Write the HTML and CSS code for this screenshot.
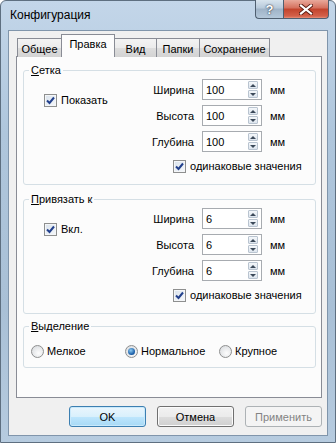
FILE: index.html
```html
<!DOCTYPE html>
<html>
<head>
    <title>Конфигурация</title>
    <meta charset="utf-8">
    <link rel="stylesheet" href="styles.css">
</head>
<body>
<div class="window">
    <div class="titlebar">
        <span class="title">Конфигурация</span>
        <div class="caption">
            <span class="cap-help">?</span>
            <span class="cap-close">
                <svg width="14" height="11" viewBox="0 0 14 11">
                    <path d="M2 1.5 L12 9.5 M12 1.5 L2 9.5" stroke="#5a1b10" stroke-width="4" stroke-linecap="square"/>
                    <path d="M2 1.5 L12 9.5 M12 1.5 L2 9.5" stroke="#fff" stroke-width="2.2" stroke-linecap="square"/>
                </svg>
            </span>
        </div>
    </div>

    <div class="client">
        <!-- tabs -->
        <div class="tabs">
            <span class="tab t-general">Общее</span>
            <span class="tab t-edit active">Правка</span>
            <span class="tab t-view">Вид</span>
            <span class="tab t-folders">Папки</span>
            <span class="tab t-save">Сохранение</span>
        </div>

        <div class="panel">
            <!-- Сетка -->
            <fieldset class="group first">
                <legend><u>С</u>етка</legend>
                <div class="group-body">
                    <div class="side">
                        <span class="check"><span class="box"><svg width="9" height="9" viewBox="0 0 9 9"><path d="M1 4.5 L3.5 7 L8 1.5" fill="none" stroke="#22408c" stroke-width="2"/></svg></span>Показать</span>
                    </div>
                    <div class="fields">
                        <span class="lbl">Ширина</span>
                        <span class="spin"><span class="val">100</span><span class="arrows"><span class="up"></span><span class="down"></span></span></span>
                        <span class="unit">мм</span>

                        <span class="lbl">Высота</span>
                        <span class="spin"><span class="val">100</span><span class="arrows"><span class="up"></span><span class="down"></span></span></span>
                        <span class="unit">мм</span>

                        <span class="lbl">Глубина</span>
                        <span class="spin"><span class="val">100</span><span class="arrows"><span class="up"></span><span class="down"></span></span></span>
                        <span class="unit">мм</span>

                        <span class="check same"><span class="box"><svg width="9" height="9" viewBox="0 0 9 9"><path d="M1 4.5 L3.5 7 L8 1.5" fill="none" stroke="#22408c" stroke-width="2"/></svg></span>одинаковые значения</span>
                    </div>
                </div>
            </fieldset>

            <!-- Привязать к -->
            <fieldset class="group second">
                <legend><u>П</u>ривязать к</legend>
                <div class="group-body">
                    <div class="side">
                        <span class="check"><span class="box"><svg width="9" height="9" viewBox="0 0 9 9"><path d="M1 4.5 L3.5 7 L8 1.5" fill="none" stroke="#22408c" stroke-width="2"/></svg></span>Вкл.</span>
                    </div>
                    <div class="fields">
                        <span class="lbl">Ширина</span>
                        <span class="spin"><span class="val">6</span><span class="arrows"><span class="up"></span><span class="down"></span></span></span>
                        <span class="unit">мм</span>

                        <span class="lbl">Высота</span>
                        <span class="spin"><span class="val">6</span><span class="arrows"><span class="up"></span><span class="down"></span></span></span>
                        <span class="unit">мм</span>

                        <span class="lbl">Глубина</span>
                        <span class="spin"><span class="val">6</span><span class="arrows"><span class="up"></span><span class="down"></span></span></span>
                        <span class="unit">мм</span>

                        <span class="check same"><span class="box"><svg width="9" height="9" viewBox="0 0 9 9"><path d="M1 4.5 L3.5 7 L8 1.5" fill="none" stroke="#22408c" stroke-width="2"/></svg></span>одинаковые значения</span>
                    </div>
                </div>
            </fieldset>

            <!-- Выделение -->
            <fieldset class="group third">
                <legend><u>В</u>ыделение</legend>
                <div class="radios">
                    <span class="radio"><span class="dot"></span>Мелкое</span>
                    <span class="radio"><span class="dot on"></span>Нормальное</span>
                    <span class="radio"><span class="dot"></span>Крупное</span>
                </div>
            </fieldset>
        </div>

        <div class="buttons">
            <span class="btn default">OK</span>
            <span class="btn">Отмена</span>
            <span class="btn disabled">Применить</span>
        </div>
    </div>
</div>
</body>
</html>
```

FILE: styles.css
```css
* {
    box-sizing: border-box;
}

body {
    margin: 0;
    background: #fff;
    font-family: "Liberation Sans", sans-serif;
    font-size: 11px;
    color: #000;
}

.window {
    width: 336px;
    height: 443px;
    border: 1px solid #5e6f80;
    border-radius: 6px 6px 0 0;
    background: linear-gradient(to bottom, #c3d6e9, #afc6dc 30%, #a9c0d6 70%, #b6cbdf);
    padding: 0 7px 6px;
    display: flex;
    flex-direction: column;
}

/* title bar */
.titlebar {
    height: 30px;
    margin-top: -1px;
    display: flex;
    justify-content: space-between;
    align-items: flex-start;
}

.title {
    font-size: 12px;
    padding: 8px 0 0 2px;
}

.caption {
    display: flex;
    margin-right: -1px;
}

.cap-help, .cap-close {
    height: 19px;
    display: flex;
    align-items: center;
    justify-content: center;
    border: 1px solid #4f5f70;
    border-top: none;
}

.cap-help {
    width: 28px;
    border-right: none;
    border-radius: 0 0 0 4px;
    background: linear-gradient(to bottom, #d8e4ee, #b7c9da 45%, #9fb3c7 50%, #b4c8da);
    color: #fff;
    font-weight: bold;
    font-size: 13px;
    text-shadow: 0 0 2px #2e3b4a, 0 0 1px #2e3b4a;
}

.cap-close {
    width: 46px;
    border-radius: 0 0 4px 0;
    background: linear-gradient(to bottom, #e9a99b, #d46f5c 45%, #c2432c 50%, #d4614a 90%, #e7917c);
}

/* client area */
.client {
    flex: 1;
    background: #f0f0f0;
    border: 1px solid #8095ab;
    padding: 3px 5px 8px 7px;
    display: flex;
    flex-direction: column;
}

.tabs {
    display: flex;
    align-items: flex-end;
    height: 23px;
    margin-bottom: -1px;
    padding-left: 1px;
    position: relative;
    z-index: 1;
}

.tab {
    height: 19px;
    padding-top: 3px;
    border: 1px solid #898c95;
    border-bottom: none;
    margin-left: -1px;
    background: linear-gradient(to bottom, #f3f3f3, #ebebeb 50%, #dddddd 51%, #d3d3d3);
    text-align: center;
    line-height: 14px;
    white-space: nowrap;
}

.t-general { width: 45px; margin-left: 0; }
.t-edit { width: 54px; }
.t-view { width: 43px; }
.t-folders { width: 44px; }
.t-save { width: 71px; }

.tab.active {
    height: 23px;
    padding-top: 2px;
    background: #fcfcfc;
    position: relative;
    z-index: 2;
}

.panel {
    height: 342px;
    border: 1px solid #898c95;
    background: #fcfcfc;
    padding: 0 5px 0 6px;
}

/* group boxes */
.group {
    margin: 0;
    padding: 2px 0 11px;
    border: 1px solid #d5dfe5;
    border-radius: 3px;
    min-width: 0;
}

.group legend {
    margin-left: 5px;
    padding: 0 2px;
    line-height: 13px;
}

.first {
    margin-top: 7px;
}

.second {
    margin-top: 8px;
}

.third {
    margin-top: 6px;
    padding: 12px 0 9px;
}

.group-body {
    display: flex;
}

.side {
    width: 124px;
    padding: 15px 0 0 20px;
}

.fields {
    display: grid;
    grid-template-columns: 46px 60px auto;
    column-gap: 8px;
    row-gap: 5px;
    align-items: center;
}

.lbl {
    text-align: right;
    white-space: nowrap;
}

.spin {
    height: 21px;
    border: 1px solid #a7abb0;
    background: #fff;
    display: flex;
    align-items: center;
    padding: 0 3px 0 3px;
}

.val {
    flex: 1;
}

.arrows {
    width: 10px;
    display: flex;
    flex-direction: column;
    gap: 1px;
}

.up, .down {
    height: 8px;
    border: 1px solid #b9c4d0;
    border-radius: 1px;
    background: linear-gradient(to bottom, #f4f7fa, #dde5ee);
    display: flex;
    align-items: center;
    justify-content: center;
}

.up::after, .down::after {
    content: "";
    border-left: 3px solid transparent;
    border-right: 3px solid transparent;
}

.up::after {
    border-bottom: 3px solid #3c4a5a;
}

.down::after {
    border-top: 3px solid #3c4a5a;
}

/* check boxes */
.check {
    display: flex;
    align-items: center;
    gap: 4px;
    line-height: 13px;
    white-space: nowrap;
}

.same {
    grid-column: 1 / -1;
    margin: 3px 0 0 25px;
}

.box {
    width: 13px;
    height: 13px;
    border: 1px solid #8e8f8f;
    background: linear-gradient(135deg, #d9e2ec, #f6f8fb);
    box-shadow: inset 0 0 0 1px #f4f6f8;
    display: flex;
    align-items: center;
    justify-content: center;
}

/* radio buttons */
.radios {
    display: flex;
    padding-left: 7px;
}

.radio {
    width: 94px;
    display: flex;
    align-items: center;
    gap: 3px;
    line-height: 13px;
    white-space: nowrap;
}

.dot {
    width: 13px;
    height: 13px;
    border: 1px solid #8e8f8f;
    border-radius: 50%;
    background: radial-gradient(circle at 60% 65%, #fdfdfd, #d4d7db);
    display: flex;
    align-items: center;
    justify-content: center;
}

.dot.on::after {
    content: "";
    width: 7px;
    height: 7px;
    border-radius: 50%;
    background: radial-gradient(circle at 40% 35%, #8ecbf1, #1a5ea8 65%, #0d3d75);
}

/* dialog buttons */
.buttons {
    display: flex;
    justify-content: flex-end;
    gap: 11px;
    margin-top: 8px;
}

.btn {
    width: 77px;
    height: 21px;
    border: 1px solid #707070;
    border-radius: 3px;
    background: linear-gradient(to bottom, #f2f2f2, #ebebeb 50%, #dddddd 51%, #cfcfcf);
    box-shadow: inset 0 0 0 1px #fbfbfb;
    display: flex;
    align-items: center;
    justify-content: center;
}

.btn.default {
    border-color: #3c7fb1;
    background: linear-gradient(to bottom, #eaf6fd, #d9f0fc 50%, #bee6fd 51%, #a7d9f5);
    box-shadow: inset 0 0 0 1px #c9e9fb;
}

.btn.disabled {
    border-color: #adb2b5;
    background: #f4f4f4;
    box-shadow: none;
    color: #838383;
}
```
